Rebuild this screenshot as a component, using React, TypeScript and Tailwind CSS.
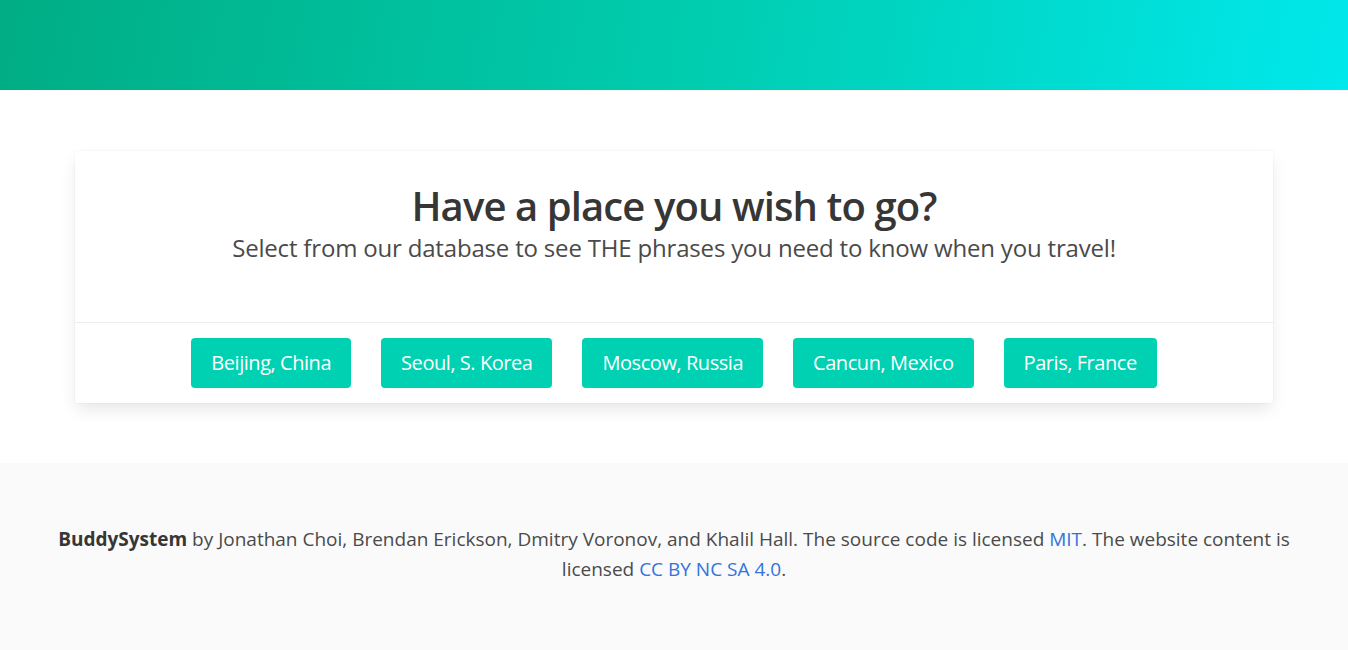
import React from "react";

const cities = ["Beijing, China", "Seoul, S. Korea", "Moscow, Russia", "Cancun, Mexico", "Paris, France"];

export default function App() {
  return (
    <div className="min-h-[650px] bg-white text-[#4a4a4a] text-[16px] leading-[1.5]" style={{ fontFamily: '"Open Sans", "Noto Sans", sans-serif' }}>
      <div className="h-[90px] bg-[linear-gradient(100deg,#00ad84_0%,#00cdb0_52%,#00e8ec_100%)]" />
      <div className="px-[75px] pt-[61px] pb-[60px]">
        <div className="bg-white rounded-[2px] shadow-[0_8px_16px_-2px_rgba(10,10,10,0.1),0_0_0_1px_rgba(10,10,10,0.02)]">
          <div className="pt-[32px] pb-[59px] text-center">
            <h1 className="text-[40px] leading-[1.125] font-semibold text-[#363636] tracking-[-0.9px]">Have a place you wish to go?</h1>
            <p className="mt-[5px] text-[24px] leading-[1.25] text-[#4a4a4a] tracking-[-0.18px]">Select from our database to see THE phrases you need to know when you travel!</p>
          </div>
          <div className="border-t border-[#ededed] pt-[15px] pb-[15px] flex justify-center gap-[30px]">
            {cities.map((c) => (
              <button key={c} className="h-[50px] px-[20px] rounded-[4px] bg-[#00d1b2] text-white text-[20px] leading-[1.5] tracking-[-0.45px]">
                {c}
              </button>
            ))}
          </div>
        </div>
      </div>
      <footer className="bg-[#fafafa] pt-[61px] pb-[96px] px-[24px] text-center">
        <p className="text-[19px] leading-[30px]">
          <strong className="font-bold text-[#363636]">BuddySystem</strong> by Jonathan Choi, Brendan Erickson, Dmitry Voronov, and Khalil Hall. The source code is licensed{" "}
          <a className="text-[#3273dc]">MIT</a>. The website content is
          <br />
          licensed <a className="text-[#3273dc]">CC BY NC SA 4.0</a>.
        </p>
      </footer>
    </div>
  );
}
